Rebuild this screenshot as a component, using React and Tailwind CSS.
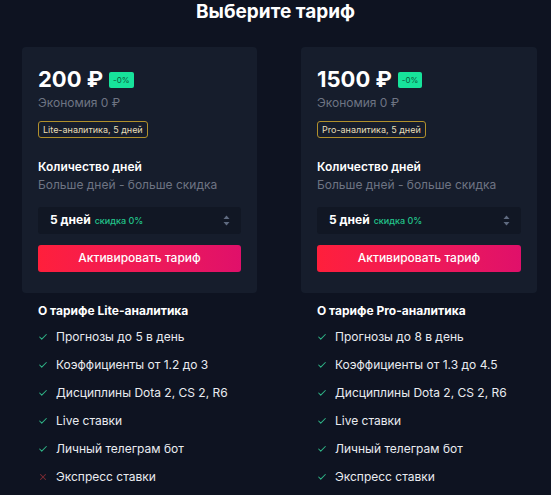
import { Check, X } from "lucide-react";

const plans = [
  {
    price: "200",
    tag: "Lite-аналитика, 5 дней",
    name: "Lite-аналитика",
    features: [
      { text: "Прогнозы до 5 в день", ok: true },
      { text: "Коэффициенты от 1.2 до 3", ok: true },
      { text: "Дисциплины Dota 2, CS 2, R6", ok: true },
      { text: "Live ставки", ok: true },
      { text: "Личный телеграм бот", ok: true },
      { text: "Экспресс ставки", ok: false },
    ],
  },
  {
    price: "1500",
    tag: "Pro-аналитика, 5 дней",
    name: "Pro-аналитика",
    features: [
      { text: "Прогнозы до 8 в день", ok: true },
      { text: "Коэффициенты от 1.3 до 4.5", ok: true },
      { text: "Дисциплины Dota 2, CS 2, R6", ok: true },
      { text: "Live ставки", ok: true },
      { text: "Личный телеграм бот", ok: true },
      { text: "Экспресс ставки", ok: true },
    ],
  },
];

const PlanColumn = ({ plan }) => (
  <div className="flex flex-col">
    {/* Card */}
    <div className="bg-[#161d2c] rounded-[4px] px-4 pt-[21px] pb-[21px]">
      <div className="flex items-center gap-[6px] h-[22px]">
        <span className="text-[22px] leading-none font-bold text-white">{plan.price} ₽</span>
        <span className="bg-[#17e39b] text-[#0b5b3c] text-[8px] leading-none rounded-[2px] px-[4px] py-[4px] mt-[1px]">-0%</span>
      </div>
      <div className="mt-[5px] text-[12px] leading-[16px] text-[#6e7483]">Экономия 0 ₽</div>
      <div className="mt-[10px] inline-flex border border-[#b1902c] rounded-[3px] px-[4px] h-[17px] items-center text-[9px] text-[#e8dfb8]">
        {plan.tag}
      </div>
      <div className="mt-[20px] text-[12px] leading-[16px] font-semibold text-white">Количество дней</div>
      <div className="mt-[2px] text-[12px] leading-[16px] text-[#6e7483] whitespace-nowrap">Больше дней - больше скидка</div>
      <div className="mt-[14px] h-[27px] bg-[#111724] rounded-[3px] flex items-center pl-3 pr-[11px]">
        <span className="text-[12px] font-bold text-white">5 дней</span>
        <span className="ml-[4px] text-[9px] font-medium text-[#22c58b]">скидка 0%</span>
        <svg className="ml-auto" width="7" height="11" viewBox="0 0 7 11">
          <path d="M3.5 0.5 L6.5 4 L0.5 4 Z" fill="#5f6b80" />
          <path d="M3.5 10.5 L6.5 7 L0.5 7 Z" fill="#5f6b80" />
        </svg>
      </div>
      <button className="mt-[11px] w-full h-[27px] rounded-[3px] bg-gradient-to-r from-[#ff1f3b] to-[#e0106a] text-white text-[12px] font-medium flex items-center justify-center">
        Активировать тариф
      </button>
    </div>

    {/* Features */}
    <div className="px-4 pt-[10px]">
      <div className="text-[12px] leading-[16px] font-bold text-white">О тарифе {plan.name}</div>
      <ul className="mt-[4px] flex flex-col">
        {plan.features.map((f) => (
          <li key={f.text} className="h-[28px] flex items-center gap-[8px] text-[12px] text-[#e9ebf0] whitespace-nowrap">
            {f.ok ? (
              <Check size={10} strokeWidth={2.5} className="text-[#2fb487]" />
            ) : (
              <X size={10} strokeWidth={2.5} className="text-[#7d2a33]" />
            )}
            <span>{f.text}</span>
          </li>
        ))}
      </ul>
    </div>
  </div>
);

export default function App() {
  return (
    <div
      className="w-[551px] h-[495px] overflow-hidden bg-[#0e1321]"
      style={{ fontFamily: "Inter, 'Noto Sans', sans-serif" }}
    >
      <h1 className="text-center text-white text-[19px] font-bold leading-[24px] pt-0">Выберите тариф</h1>
      <div className="mt-[23px] pl-[22px] grid grid-cols-[235px_236px] gap-x-[44px]">
        {plans.map((p) => (
          <PlanColumn key={p.name} plan={p} />
        ))}
      </div>
    </div>
  );
}
